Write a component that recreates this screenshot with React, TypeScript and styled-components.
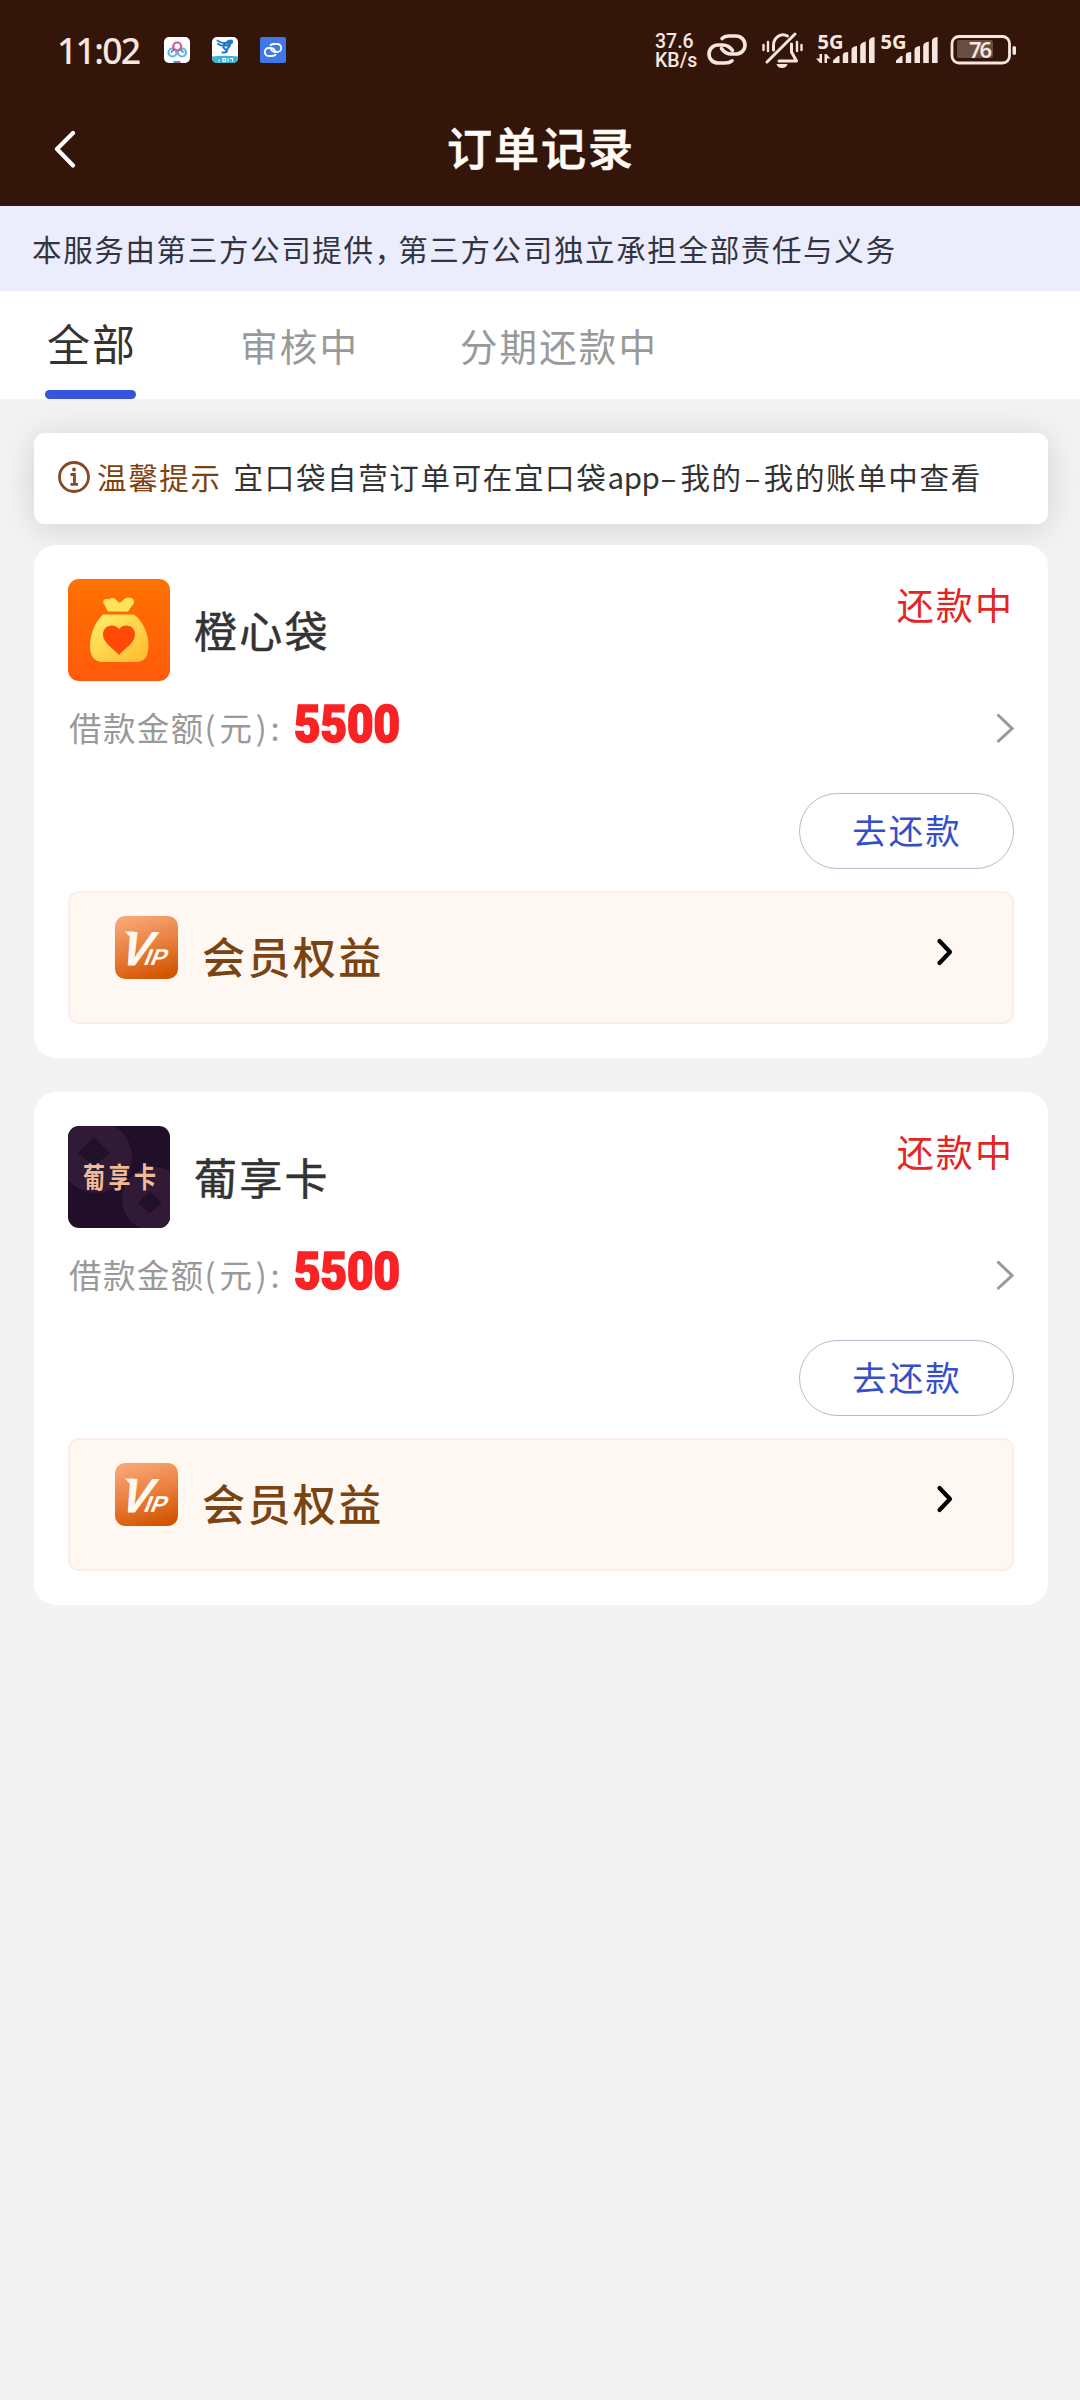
import React from 'react';
import styled, { createGlobalStyle } from 'styled-components';

const GlobalStyle = createGlobalStyle`
  * { box-sizing: border-box; }
  body {
    margin: 0;
    background: #f3f3f3;
    font-family: "Noto Sans CJK SC", "Noto Sans", sans-serif;
    color: #333;
  }
  svg { display: block; flex: none; }
`;

const Screen = styled.main`
  width: 1080px;
  min-height: 2400px;
  background: #f3f3f3;
`;

/* ---------- top area ---------- */

const TopArea = styled.header`
  height: 206px;
  background: #331609;
`;

const StatusBar = styled.div`
  height: 100px;
  display: flex;
  align-items: center;
  padding: 0 64px 0 57px;
  color: #f6e6df;
`;

const Clock = styled.time`
  width: 107px;
  font: 500 35.5px/40px "Noto Sans", sans-serif;
  letter-spacing: -1.7px;
`;

const AppIcons = styled.div`
  display: flex;
  gap: 22px;
  flex: 1;
`;

const NetSpeed = styled.div`
  display: flex;
  flex-direction: column;
  width: 52px;
  padding-top: 1px;
  font: 500 19.5px/19px Roboto, sans-serif;
`;

const StatusText = styled.text<{ $size: number; $weight: number }>`
  font-family: "Noto Sans", sans-serif;
  font-size: ${(p) => p.$size}px;
  font-weight: ${(p) => p.$weight};
  fill: #f6e6df;
`;

const NavBar = styled.nav`
  height: 106px;
  display: grid;
  grid-template-columns: 120px 1fr 120px;
  align-items: start;
`;

const BackButton = styled.button`
  border: 0;
  background: none;
  padding: 30px 0 0 53px;
  cursor: pointer;
`;

const Title = styled.h1`
  margin: 0;
  padding: 18px 0 0 2px;
  text-align: center;
  font-size: 45px;
  font-weight: 500;
  line-height: 58px;
  letter-spacing: 2px;
  color: #fffaf6;
  -webkit-text-stroke: 0.7px #fffaf6;
`;

const Banner = styled.p`
  margin: 0;
  height: 85px;
  padding: 0 0 1px 32px;
  background: #ebedfd;
  font-size: 29.5px;
  line-height: 85px;
  letter-spacing: 1.65px;
  color: #333440;
  white-space: nowrap;
`;

const Comma = styled.span`
  letter-spacing: -6px;
`;

/* ---------- tabs ---------- */

const TabBar = styled.div`
  height: 108px;
  display: flex;
  align-items: stretch;
  padding-left: 45px;
  background: #fff;
`;

const Tab = styled.button<{ $active?: boolean; $gap: number }>`
  border: 0;
  background: none;
  padding: 0;
  margin-right: ${(p) => p.$gap}px;
  display: flex;
  flex-direction: column;
  justify-content: space-between;
  font-family: inherit;
  font-size: ${(p) => (p.$active ? 43 : 37.5)}px;
  line-height: ${(p) => (p.$active ? 103 : 108)}px;
  letter-spacing: 2.1px;
  color: ${(p) => (p.$active ? '#333' : '#999')};
  white-space: nowrap;
  cursor: pointer;
`;

const TabLabel = styled.span`
  display: block;
  height: 99px;
  padding-left: 2px;
`;

const TabLine = styled.span`
  width: 91px;
  height: 9px;
  border-radius: 5px;
  background: #3655df;
`;

/* ---------- content ---------- */

const Content = styled.section`
  padding: 34px 32px 0 34px;
`;

const Notice = styled.div`
  height: 91px;
  display: flex;
  align-items: center;
  padding: 0 0 3px 24px;
  border-radius: 11px;
  background: #fff;
  box-shadow: 0 4px 36px rgba(0, 0, 0, 0.14);
  font-size: 29.5px;
  letter-spacing: 1.65px;
  line-height: 40px;
  white-space: nowrap;
`;

const NoticeTag = styled.span`
  margin: 0 12px 2px 7px;
  color: #7f4110;
`;

const NoticeText = styled.span`
  margin-bottom: 2px;
`;

const Latin = styled.span`
  letter-spacing: -0.4px;
`;

const Dash = styled.span`
  display: inline-block;
  width: 21px;
  margin: 0 1px 0 -1px;
  text-align: center;
  letter-spacing: 0;
  transform: scaleX(1.7);
`;

const OrderList = styled.div`
  display: flex;
  flex-direction: column;
  gap: 34px;
  margin-top: 21px;
`;

const Card = styled.article`
  position: relative;
  height: 513px;
  padding: 34px;
  border-radius: 22px;
  background: #fff;
`;

const CardHead = styled.div`
  display: flex;
  height: 102px;
`;

const Logo = styled.div<{ $bg: string }>`
  width: 102px;
  height: 102px;
  border-radius: 11px;
  overflow: hidden;
  background: ${(p) => p.$bg};
`;

const Name = styled.h2`
  flex: 1;
  margin: 0 0 0 24px;
  font-size: 43px;
  font-weight: 400;
  line-height: 101px;
  letter-spacing: 2.2px;
  -webkit-text-stroke: 0.5px #333;
`;

const Status = styled.span`
  font-size: 37px;
  line-height: 50px;
  letter-spacing: 2.1px;
  color: #e32525;
`;

const AmountRow = styled.div`
  display: flex;
  align-items: center;
  height: 66px;
  margin-top: 14px;
`;

const AmountLabel = styled.span`
  width: 226px;
  padding: 0 0 2px 1px;
  font-size: 32.5px;
  line-height: 50px;
  letter-spacing: 1.4px;
  color: #999;
  white-space: nowrap;
`;

const Unit = styled.span`
  letter-spacing: 3.8px;
`;

const Amount = styled.strong`
  flex: 1;
  font-family: Roboto, sans-serif;
  font-size: 51.5px;
  font-weight: 900;
  line-height: 60px;
  color: #f92224;
  -webkit-text-stroke: 1.7px #f92224;
  transform: scaleX(0.888);
  transform-origin: left center;
  margin-bottom: 6px;
`;

const ActionRow = styled.div`
  display: flex;
  justify-content: flex-end;
  margin-top: 32px;
`;

const PayButton = styled.button`
  width: 215px;
  height: 76px;
  padding: 0 0 5px 1px;
  border: 1px solid #b9b9cb;
  border-radius: 38px;
  background: #fff;
  font-family: inherit;
  font-size: 34.5px;
  letter-spacing: 2px;
  color: #344fc8;
  cursor: pointer;
`;

const Member = styled.div`
  display: flex;
  align-items: flex-start;
  height: 133px;
  margin-top: 22px;
  padding: 23px 0 0 45px;
  border: 2px solid #faeee6;
  border-radius: 11px;
  background: #fff8f2;
`;

const MemberLabel = styled.span`
  width: 733px;
  margin: 8px 0 0 24px;
  font-size: 43px;
  font-weight: 500;
  line-height: 62px;
  letter-spacing: 2.4px;
  color: #7a4312;
`;

const ChevronSlot = styled.span`
  padding-top: 20px;
`;

/* ---------- drawings ---------- */

const CloudIcon = () => (
  <svg width="26" height="26" viewBox="0 0 26 26" fill="none">
    <rect width="26" height="26" rx="5" fill="#fff" />
    <circle cx="8.5" cy="15.5" r="4" stroke="#62b7df" strokeWidth="2.2" />
    <circle cx="18" cy="15.5" r="4" stroke="#62b7df" strokeWidth="2.2" />
    <circle cx="13.2" cy="9.5" r="4" stroke="#d65a8b" strokeWidth="2.2" />
    <path d="M10 12.5l-3 3M16.5 12.5l3 3" stroke="#3b7dd8" strokeWidth="1.6" />
    <rect x="9.5" y="24" width="3.5" height="2" fill="#3f9be0" />
    <rect x="13" y="24" width="3.5" height="2" fill="#e0557a" />
  </svg>
);

const TelecomIcon = () => (
  <svg width="26" height="26" viewBox="0 0 26 26" fill="none">
    <rect width="26" height="26" rx="5" fill="#fff" />
    <path d="M0 19.5q13-1.5 26 0V21a5 5 0 0 1-5 5H5a5 5 0 0 1-5-5z" fill="#3cb4d8" />
    <g stroke="#2277cc" strokeWidth="2" strokeLinecap="round">
      <path d="M20 4c-2-1.500-5 .5-6 2.500M5.500 3.500c2 2.500 8 3.500 14.500 1" />
      <path d="M6 7c4 2.500 10 2.500 14-1.500M13 6.500c-3 3-2 4.500 .5 6 2 1.500.5 3.500-3 3M18 8.500c-2 2-3.500 4-3.500 6.500" />
    </g>
    <path d="M7 22.5v2M11 21.5h2.500v3H11zM16 21.5v3M18 21.5h2.500v3" stroke="#fff" strokeWidth="1.2" />
  </svg>
);

const LinkAppIcon = () => (
  <svg width="26" height="26" viewBox="0 0 26 26" fill="none">
    <rect width="26" height="26" rx="2" fill="#3f78e8" />
    <g stroke="#fff" strokeWidth="1.8" strokeLinecap="round">
      <path d="M10.500 8.200Q12 7 14 7H17.200A4 4 0 0 1 17.200 15H15Q12.500 15 11 12.500" />
      <path d="M15.500 17.800Q14 19 12 19H8.800A4 4 0 0 1 8.800 11H11Q13.500 11 15 13.500" />
    </g>
  </svg>
);

const StatusIcons = () => (
  <svg width="309" height="60" viewBox="707 20 309 60" fill="none">
    <g stroke="#f6e6df" strokeLinecap="round" strokeWidth="3.6" strokeLinejoin="round">
      <path d="M722 38.5Q724.500 36 729 36H736A9 9 0 0 1 736 54H731.500C726.500 54 723.500 51.500 721.500 48.500" />
      <path d="M732 60.800Q729.500 63 725 63H718A9 9 0 0 1 718 45H722.500C727.500 45 730.500 47.500 732.500 50.500" />
      <path d="M773.500 50V45a9.500 10.500 0 0 1 14-9M791.500 44v8l5 9H779" strokeWidth="3" />
      <path d="M767 62L795 34" strokeWidth="3" />
      <path d="M763.500 45v5M768 42v9M797 42v9M801.500 45v5" strokeWidth="2.400" />
    </g>
    <path d="M776.500 64h11q-1 4-5.500 4t-5.500-4z" fill="#f6e6df" />
    <StatusText x="817.500" y="48.500" $size={19.5} $weight={700} textLength="26" lengthAdjust="spacingAndGlyphs">5G</StatusText>
    <StatusText x="880.500" y="48.500" $size={19.5} $weight={700} textLength="26" lengthAdjust="spacingAndGlyphs">5G</StatusText>
    <g fill="#f6e6df">
      <path d="M819.500 54h2.500v9h-2l-4-4.500h3.500zM824.500 63v-9h2l4 4.500H827V63z" />
      {[0, 63].map((dx) => (
        <g key={dx} transform={`translate(${dx} 0)`}>
          <path d="M833 63v-2.500l5-4.500h1.500v7zM842.800 63V55q0-3 5.400-3v11zM851.500 63V50q0-3.500 5.500-4v17zM860.200 63V46q0-3.500 5.600-4.500V63zM869 63V41q0-3.500 5.600-4V63z" />
        </g>
      ))}
      <rect x="1012.500" y="46" width="3.500" height="9" rx="1.700" />
      <rect x="957" y="40" width="36" height="18" rx="2" opacity=".27" />
    </g>
    <rect x="952" y="36.500" width="57.500" height="26.500" rx="7" stroke="#f6e6df" strokeWidth="2.800" />
    <StatusText x="969" y="57.800" $size={22} $weight={600} textLength="23">76</StatusText>
  </svg>
);

const BackIcon = () => (
  <svg width="24" height="38" viewBox="0 0 24 38" fill="none">
    <path d="M20 3L4 19l16 16.500" stroke="#fff" strokeWidth="4.200" strokeLinecap="round" strokeLinejoin="round" />
  </svg>
);

const InfoIcon = () => (
  <svg width="32" height="32" viewBox="0 0 32 32" fill="none" stroke="#854a24">
    <circle cx="16" cy="16" r="14.500" strokeWidth="2.800" />
    <path d="M12.500 13.500h4V23M12.500 23.300h7.500" strokeWidth="2.800" />
    <circle cx="16" cy="8.500" r="1.900" fill="#854a24" stroke="none" />
  </svg>
);

const BagLogo = () => (
  <svg width="102" height="102" viewBox="0 0 102 102">
    <defs>
      <linearGradient id="bag" x1="0" y1="0" x2="1" y2="1">
        <stop offset="0" stopColor="#fff06a" />
        <stop offset="1" stopColor="#ffb92e" />
      </linearGradient>
    </defs>
    <path d="M36 25c-2.500-4 2-6 5-4.500 3-3 7-1 9.500 3 3.500 1 5-5 10-5 6 0 7 5 3 9l-3.500 5H40z" fill="#ffe35a" />
    <path d="M35 35.500h31c9 7 14.500 19 14.500 31 0 11-4 16.500-13 16.500H35c-9 0-13-6-13-16 0-12 5-24 13-31.500z" fill="url(#bag)" />
    <path d="M51 76C46 70 35 64 35 55.500c0-9 10.500-12 16-5.500 5.500-6.500 16-3.500 16 5.500C67 64 56 70 51 76z" fill="#ff4a05" />
  </svg>
);

const WordmarkText = styled.text`
  font-family: "Noto Sans CJK SC", sans-serif;
  font-weight: 700;
  fill: #f0bc98;
`;

const CardLogo = () => (
  <svg width="102" height="102" viewBox="0 0 102 102">
    <g fill="#301a35">
      <circle cx="28" cy="31" r="36" />
      <circle cx="86" cy="73" r="32" />
    </g>
    <path d="M26 11l16 16-16 13-16-13zM82 65l12 12-12 10-12-10z" fill="#21102a" />
    <WordmarkText x="15" y="60" fontSize="22" textLength="73" lengthAdjust="spacing" transform="matrix(1 0 0 1.280 0 -14.500)">葡享卡</WordmarkText>
  </svg>
);

const VipText = styled.text`
  font-family: "Liberation Sans", sans-serif;
  font-weight: 700;
  fill: #fff8ee;
`;

const VipIcon = () => (
  <svg width="63" height="63" viewBox="0 0 63 63">
    <defs>
      <linearGradient id="vip" x1=".35" y1="0" x2=".65" y2="1">
        <stop offset="0" stopColor="#f7a673" />
        <stop offset=".5" stopColor="#e97e3d" />
        <stop offset="1" stopColor="#d25500" />
      </linearGradient>
    </defs>
    <rect width="63" height="63" rx="10" fill="url(#vip)" />
    <path d="M9.500 15.500h10v4h-6.500q-.5-2.500-3.500-4z" fill="#fff8ee" />
    <VipText transform="translate(2 48.500) skewX(-22)" fontSize="47.500" stroke="#fff8ee" strokeWidth=".8">
      <tspan textLength="29" lengthAdjust="spacingAndGlyphs">V</tspan>
      <tspan fontSize="23" dx="-3.500" strokeWidth="0">IP</tspan>
    </VipText>
  </svg>
);

const GrayChevron = () => (
  <svg width="20" height="32" viewBox="0 0 20 32" fill="none">
    <path d="M3.500 2.500L18 16.500 3.500 30" stroke="#999" strokeWidth="3" />
  </svg>
);

const BlackChevron = () => (
  <svg width="20" height="32" viewBox="0 0 20 32" fill="none">
    <path d="M4.500 5L15 16 4.500 27" stroke="#000" strokeWidth="4.200" strokeLinecap="round" strokeLinejoin="round" />
  </svg>
);

/* ---------- data & page ---------- */

const orders = [
  { name: '橙心袋', amount: '5500', bg: 'linear-gradient(#ff7200, #ff5a0c)', logo: <BagLogo /> },
  { name: '葡享卡', amount: '5500', bg: '#210f2a', logo: <CardLogo /> },
];

export default function App() {
  return (
    <>
      <GlobalStyle />
      <Screen>
        <TopArea>
          <StatusBar>
            <Clock>11:02</Clock>
            <AppIcons>
              <CloudIcon />
              <TelecomIcon />
              <LinkAppIcon />
            </AppIcons>
            <NetSpeed>
              <span>37.6</span>
              <span>KB/s</span>
            </NetSpeed>
            <StatusIcons />
          </StatusBar>
          <NavBar>
            <BackButton aria-label="返回">
              <BackIcon />
            </BackButton>
            <Title>订单记录</Title>
          </NavBar>
        </TopArea>

        <Banner>
          本服务由第三方公司提供<Comma>，</Comma>第三方公司独立承担全部责任与义务
        </Banner>

        <TabBar>
          <Tab $active $gap={101}>
            <TabLabel>全部</TabLabel>
            <TabLine />
          </Tab>
          <Tab $gap={99}>
            <TabLabel>审核中</TabLabel>
          </Tab>
          <Tab $gap={0}>
            <TabLabel>分期还款中</TabLabel>
          </Tab>
        </TabBar>

        <Content>
          <Notice>
            <InfoIcon />
            <NoticeTag>温馨提示</NoticeTag>
            <NoticeText>
              宜口袋自营订单可在宜口袋<Latin>app</Latin>
              <Dash>-</Dash>我的<Dash>-</Dash>我的账单中查看
            </NoticeText>
          </Notice>

          <OrderList>
            {orders.map((o) => (
              <Card key={o.name}>
                <CardHead>
                  <Logo $bg={o.bg}>{o.logo}</Logo>
                  <Name>{o.name}</Name>
                  <Status>还款中</Status>
                </CardHead>
                <AmountRow>
                  <AmountLabel>
                    借款金额<Unit>(元):</Unit>
                  </AmountLabel>
                  <Amount>{o.amount}</Amount>
                  <GrayChevron />
                </AmountRow>
                <ActionRow>
                  <PayButton>去还款</PayButton>
                </ActionRow>
                <Member>
                  <VipIcon />
                  <MemberLabel>会员权益</MemberLabel>
                  <ChevronSlot>
                    <BlackChevron />
                  </ChevronSlot>
                </Member>
              </Card>
            ))}
          </OrderList>
        </Content>
      </Screen>
    </>
  );
}
